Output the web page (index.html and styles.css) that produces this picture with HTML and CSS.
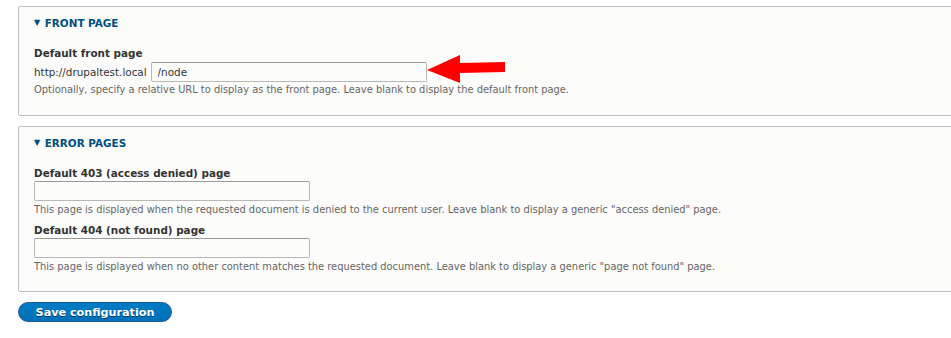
FILE: index.html
```html
<!DOCTYPE html>
<html lang="en">
  <head>
    <meta charset="UTF-8" />
    <title>Basic site settings</title>
    <link rel="stylesheet" href="styles.css">
  </head>
  <body>
    <form class="settings">
      <div class="panel panel--front">
        <div class="panel__title"><span class="panel__toggle">&#9660;</span> Front page</div>
        <div class="field">
          <div class="field__label">Default front page</div>
          <div class="field__row">
            <span class="field__prefix">http://drupaltest.local</span>
            <span class="field__wrap">
              <input class="field__input" type="text" value="/node">
              <svg class="arrow" width="82" height="32" viewBox="0 0 82 32">
                <polygon points="0,16 33,1 33,9 78,8 78,18 33,19 33,29" fill="#ff0000"/>
              </svg>
            </span>
          </div>
          <div class="field__desc field__desc--tight">Optionally, specify a relative URL to display as the front page. Leave blank to display the default front page.</div>
        </div>
      </div>

      <div class="panel panel--errors">
        <div class="panel__title"><span class="panel__toggle">&#9660;</span> Error pages</div>
        <div class="field">
          <div class="field__label">Default 403 (access denied) page</div>
          <input class="field__input" type="text">
          <div class="field__desc">This page is displayed when the requested document is denied to the current user. Leave blank to display a generic "access denied" page.</div>
        </div>
        <div class="field field--next">
          <div class="field__label">Default 404 (not found) page</div>
          <input class="field__input" type="text">
          <div class="field__desc">This page is displayed when no other content matches the requested document. Leave blank to display a generic "page not found" page.</div>
        </div>
      </div>

      <div class="actions">
        <button class="button" type="button">Save configuration</button>
      </div>
    </form>
  </body>
</html>
```

FILE: styles.css
```css
body {
  margin: 0;
  background-color: #ffffff;
  color: #333333;
  font-family: "DejaVu Sans", "Liberation Sans", sans-serif;
  overflow: hidden;
}

.settings {
  padding: 6px 0 0 18px;
}

.panel {
  margin-right: -20px;
  padding: 8px 16px 18px 15px;
  background-color: #fcfcfa;
  border: 1px solid #bfbfbf;
  border-radius: 2px;
}

.panel--errors {
  margin-top: 10px;
  padding-bottom: 17px;
}

.panel__title {
  height: 16px;
  line-height: 16px;
  color: #004f80;
  font-size: 10.4px;
  font-weight: bold;
  text-transform: uppercase;
}

.panel__toggle {
  display: inline-block;
  font-size: 8px;
  vertical-align: top;
  margin-right: 1px;
}

.field {
  margin-top: 14px;
}

.panel--errors .field--next {
  margin-top: 5px;
}

.field__label {
  line-height: 16px;
  font-size: 10.4px;
  font-weight: bold;
  color: #333333;
}

.field__row {
  display: flex;
  align-items: center;
  margin-top: 1px;
  font-size: 10.4px;
}

.field__prefix {
  margin-right: 4px;
}

.field__wrap {
  position: relative;
  display: flex;
}

.field__input {
  display: block;
  box-sizing: border-box;
  width: 276px;
  height: 20px;
  margin: 0;
  padding: 0 6px;
  border: 1px solid #b8b8b8;
  border-top-color: #999999;
  border-radius: 2px;
  background-color: #fcfcfa;
  color: #333333;
  font-family: "DejaVu Sans", "Liberation Sans", sans-serif;
  font-size: 10.4px;
}

.arrow {
  position: absolute;
  left: 276px;
  top: -8px;
}

.field__desc {
  margin-top: 2px;
  line-height: 14px;
  font-size: 9.9px;
  color: #666666;
}

.field__desc--tight {
  margin-top: 1px;
}

.actions {
  margin-top: 10px;
}

.button {
  display: block;
  width: 154px;
  height: 20px;
  padding: 0;
  border: 1px solid #1e5c90;
  border-radius: 10px;
  background: linear-gradient(#007bc6, #0071b8);
  color: #ffffff;
  font-family: "DejaVu Sans", "Liberation Sans", sans-serif;
  font-size: 11.2px;
  font-weight: bold;
  text-shadow: 0 1px 0 rgba(0, 0, 0, 0.5);
}
```
